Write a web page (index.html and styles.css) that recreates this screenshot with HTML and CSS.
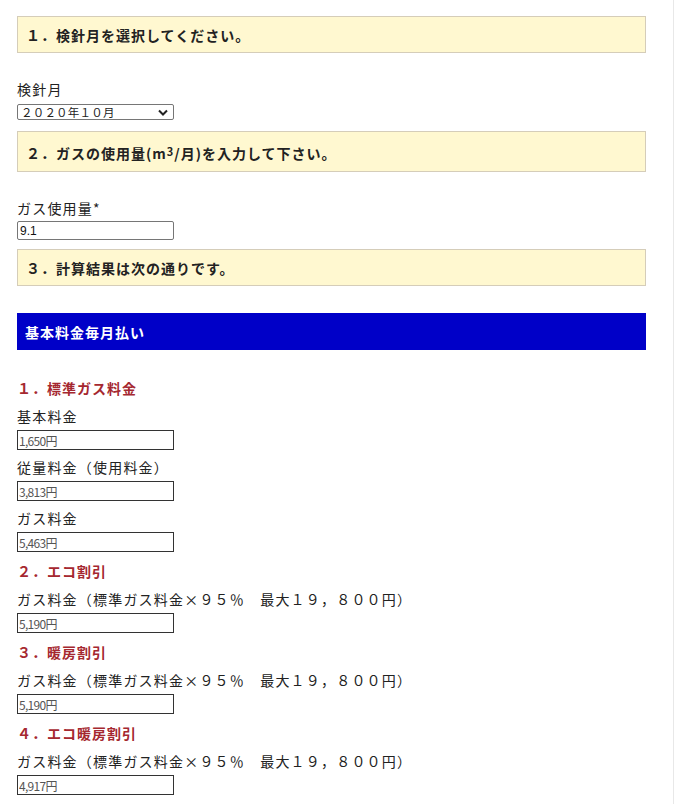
FILE: index.html
```html
<!DOCTYPE html>
<html lang="ja">
<head>
  <meta charset="UTF-8" />
  <meta name="viewport" content="width=device-width, initial-scale=1" />
  <title>ガス料金シミュレーション</title>
  <link rel="stylesheet" href="styles.css">
</head>
<body>
  <div class="page">
    <div class="content">

      <!-- Step 1 -->
      <div class="step">１．検針月を選択してください。</div>
      <div class="field">
        <label class="label" for="month">検針月</label>
        <div class="select-wrap">
          <select id="month" class="month-select">
            <option>２０２０年１０月</option>
            <option>２０２０年９月</option>
            <option>２０２０年８月</option>
          </select>
          <svg class="chevron" width="10" height="7" viewBox="0 0 10 7">
            <path d="M1 1.5 L5 5.5 L9 1.5" fill="none" stroke="#222" stroke-width="2" />
          </svg>
        </div>
      </div>

      <!-- Step 2 -->
      <div class="step step-tall">２．ガスの使用量(m<sup>3</sup>/月)を入力して下さい。</div>
      <div class="field field-usage">
        <label class="label" for="usage">ガス使用量*</label>
        <input type="text" id="usage" class="usage-input" value="9.1" />
      </div>

      <!-- Step 3 -->
      <div class="step">３．計算結果は次の通りです。</div>

      <div class="plan-title">基本料金毎月払い</div>

      <div class="result">
        <h3 class="result-title">１．標準ガス料金</h3>
        <div class="field">
          <div class="label">基本料金</div>
          <input type="text" class="price" value="1,650円" readonly />
        </div>
        <div class="field">
          <div class="label">従量料金（使用料金）</div>
          <input type="text" class="price" value="3,813円" readonly />
        </div>
        <div class="field">
          <div class="label">ガス料金</div>
          <input type="text" class="price" value="5,463円" readonly />
        </div>

        <h3 class="result-title">２．エコ割引</h3>
        <div class="field">
          <div class="label">ガス料金（標準ガス料金×９５％　最大１９，８００円）</div>
          <input type="text" class="price" value="5,190円" readonly />
        </div>

        <h3 class="result-title">３．暖房割引</h3>
        <div class="field">
          <div class="label">ガス料金（標準ガス料金×９５％　最大１９，８００円）</div>
          <input type="text" class="price" value="5,190円" readonly />
        </div>

        <h3 class="result-title">４．エコ暖房割引</h3>
        <div class="field">
          <div class="label">ガス料金（標準ガス料金×９５％　最大１９，８００円）</div>
          <input type="text" class="price" value="4,917円" readonly />
        </div>
      </div>

    </div>
  </div>
</body>
</html>
```

FILE: styles.css
```css
/* Base */
* {
  box-sizing: border-box;
  margin: 0;
  padding: 0;
}

body {
  font-family: "Noto Sans CJK JP", "Noto Sans", sans-serif;
  color: #222;
  background: #fff;
}

.page {
  width: 674px;
  min-height: 100vh;
  border-right: 1px solid #e8e8e8;
}

.content {
  padding: 16px 27px 0 17px;
}

/* Yellow step boxes */
.step {
  background: #fff8d0;
  border: 1px solid #d5cdb9;
  height: 37px;
  padding: 0 8px;
  display: flex;
  align-items: center;
  font-size: 14px;
  font-weight: bold;
  letter-spacing: 1px;
  margin-bottom: 26px;
}

.step-tall {
  height: 41px;
  padding-top: 2px;
}

.step sup {
  font-size: 11px;
  line-height: 1;
  position: relative;
  top: -1px;
}

/* Labels and fields */
.field {
  margin-bottom: 11px;
}

.label {
  display: block;
  font-size: 14px;
  line-height: 20px;
  letter-spacing: 1.2px;
  color: #222;
  margin-bottom: 5px;
}

.field-usage {
  margin-bottom: 9px;
}

.field-usage .label {
  margin-bottom: 3px;
}

.select-wrap {
  position: relative;
  width: 157px;
}

.month-select {
  display: block;
  width: 157px;
  height: 16px;
  appearance: none;
  -webkit-appearance: none;
  font-family: "Noto Sans CJK JP", sans-serif;
  font-size: 11.5px;
  letter-spacing: 0.2px;
  line-height: 14px;
  padding: 0 3px;
  border: 1px solid #767676;
  border-radius: 2px;
  background: #fff;
  color: #222;
}

.chevron {
  position: absolute;
  right: 6px;
  top: 5px;
  pointer-events: none;
}

.usage-input {
  display: block;
  width: 157px;
  height: 19px;
  font-family: "Liberation Sans", Arial, sans-serif;
  font-size: 12px;
  padding: 0 2px;
  border: 1px solid #767676;
  border-radius: 2px;
  color: #111;
}

/* Blue plan header */
.plan-title {
  background: #0000c8;
  color: #fff;
  height: 37px;
  display: flex;
  align-items: center;
  padding: 0 8px;
  font-size: 14px;
  font-weight: bold;
  letter-spacing: 1px;
  margin-top: 27px;
  margin-bottom: 28px;
}

/* Results */
.result-title {
  font-size: 14px;
  line-height: 20px;
  font-weight: bold;
  color: #a52830;
  letter-spacing: 1px;
  margin-bottom: 8px;
}

.result .label {
  margin-bottom: 4px;
}

.result .field {
  margin-bottom: 7px;
}

.result .field + .result-title {
  margin-top: 9px;
}

.price {
  display: block;
  width: 157px;
  height: 20px;
  font-family: "Noto Sans CJK JP", sans-serif;
  font-size: 12px;
  letter-spacing: -0.7px;
  padding: 0 1px;
  border: 1px solid #333;
  color: #555;
  background: #fff;
  outline: none;
}
```
